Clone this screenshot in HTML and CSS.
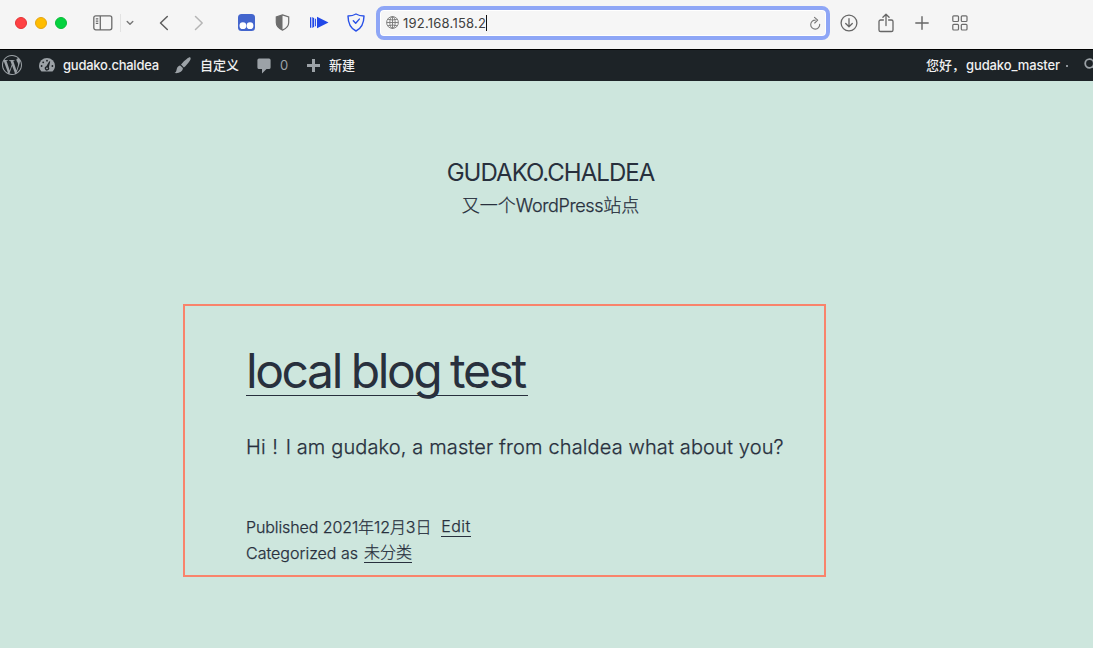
FILE: index.html
```html
<!DOCTYPE html>
<html lang="zh-CN">
<head>
<meta charset="utf-8">
<title>gudako.chaldea</title>
<link rel="stylesheet" href="styles.css">
</head>
<body>
<header class="toolbar">
  <span class="light red"></span><span class="light yellow"></span><span class="light green"></span>
  <svg class="sidebar-icon" width="20" height="16" viewBox="0 0 20 16" fill="none" stroke="#6b6b6b" stroke-width="1.3"><rect x=".8" y=".8" width="18" height="14" rx="2"/><path d="M7.3 1v14M2.8 3.8h2.5M2.8 6.1h2.5M2.8 8.4h2.5"/></svg>
  <span class="divider"></span>
  <svg class="chevron" width="8" height="6" viewBox="0 0 8 6" fill="none" stroke="#777" stroke-width="1.4" stroke-linecap="round" stroke-linejoin="round"><path d="M1.2 1.4 4 4.2 6.8 1.4"/></svg>
  <svg class="back" width="10" height="16" viewBox="0 0 10 16" fill="none" stroke="#5f5f5f" stroke-width="1.5" stroke-linecap="round" stroke-linejoin="round"><path d="M8.3 1.5 1.5 8l6.8 6.5"/></svg>
  <svg class="forward" width="10" height="16" viewBox="0 0 10 16" fill="none" stroke="#b5b5b5" stroke-width="1.5" stroke-linecap="round" stroke-linejoin="round"><path d="M1.5 1.5 8.2 8l-6.7 6.5"/></svg>
  <svg class="ext-mask" width="17" height="17" viewBox="0 0 17 17"><rect width="17" height="17" rx="3.5" fill="#4365cd"/><circle cx="4.9" cy="11.7" r="3.4" fill="#fff"/><circle cx="12" cy="11.7" r="3.4" fill="#fff"/></svg>
  <svg class="ext-shield" width="15" height="17" viewBox="0 0 15 17"><path d="M7.5.9 13.7 3v5.500c0 3.600-2.500 6-6.200 7.600C3.800 14.500 1.300 12.100 1.300 8.500V3z" fill="none" stroke="#6d6d6d" stroke-width="1.2"/><path d="M7.5.9 1.300 3v5.500c0 3.600 2.500 6 6.200 7.600z" fill="#6d6d6d"/></svg>
  <svg class="ext-play" width="19" height="13" viewBox="0 0 19 13" fill="#2148e8"><path d="M0 1.200h1.300v10.600H0zM2.300 1l1.900 1.200v8.600L2.300 12zM5.100 2.500l.9.400v7.200l-.9.400zM7 .8 18.500 6.500 7 12.200z"/></svg>
  <svg class="ext-check" width="18" height="19" viewBox="0 0 18 19" fill="none" stroke="#2850e8" stroke-width="1.4" stroke-linecap="round" stroke-linejoin="round"><path d="M9 1c2.300 1.400 5 2 8 2-.1 7.300-2.200 12.200-8 15C3.200 15.200 1.100 10.300 1 3c3 0 5.700-.6 8-2z"/><path d="m6.300 7.700 2.400 2.600 3.600-4.200"/></svg>
  <div class="address">
    <svg width="13" height="13" viewBox="0 0 13 13" fill="none" stroke="#777" stroke-width=".9"><circle cx="6.500" cy="6.500" r="5.900"/><ellipse cx="6.500" cy="6.500" rx="2.700" ry="5.900"/><path d="M6.500.6v11.800M.6 6.500h11.800M1.700 3.200q4.800 1.600 9.600 0M1.700 9.800q4.800-1.600 9.600 0"/></svg>
    <span class="url">192.168.158.2</span><span class="caret"></span>
    <svg class="reload" width="12" height="14" viewBox="0 0 12 14" fill="none" stroke="#777" stroke-width="1.1" stroke-linecap="round" stroke-linejoin="round"><path d="M6 4.100h.3A4.500 4.500 0 1 0 10.700 8.300M5.500 1.300l3.200 2.900L5.700 7"/></svg>
  </div>
  <svg class="download" width="18" height="18" viewBox="0 0 18 18" fill="none" stroke="#666" stroke-width="1.3" stroke-linecap="round" stroke-linejoin="round"><circle cx="9" cy="9" r="7.900"/><path d="M9 4.700v8M5.700 9.500 9 12.800l3.300-3.300"/></svg>
  <svg class="share" width="16" height="20" viewBox="0 0 16 20" fill="none" stroke="#666" stroke-width="1.3" stroke-linecap="round" stroke-linejoin="round"><path d="M5.400 7H2.600A1.600 1.600 0 0 0 1 8.600v8.300a1.600 1.600 0 0 0 1.600 1.600h10.800a1.600 1.600 0 0 0 1.600-1.600V8.600A1.600 1.600 0 0 0 13.400 7h-2.800M8 12.500V1.300M4.900 4.300 8 1.200l3.100 3.100"/></svg>
  <svg class="plus" width="14" height="14" viewBox="0 0 14 14" stroke="#666" stroke-width="1.4" stroke-linecap="round"><path d="M7 .8v12.400M.8 7h12.400"/></svg>
  <svg class="tabs" width="16" height="16" viewBox="0 0 16 16" fill="none" stroke="#6b6b6b" stroke-width="1.2"><rect x=".8" y=".8" width="5.700" height="5.700" rx="1"/><rect x="9.300" y=".8" width="5.700" height="5.700" rx="1"/><rect x=".8" y="9.300" width="5.700" height="5.700" rx="1"/><rect x="9.300" y="9.300" width="5.700" height="5.700" rx="1"/></svg>
</header>

<nav class="adminbar">
  <svg class="wp" width="20" height="20" viewBox="0 0 24 24" fill="#9ca2a7"><path d="M21.469 6.825c.84 1.537 1.318 3.300 1.318 5.175 0 3.979-2.156 7.456-5.363 9.325l3.295-9.527c.615-1.540.820-2.771.820-3.864 0-.405-.026-.780-.070-1.110m-7.981.105c.647-.030 1.232-.105 1.232-.105.582-.075.514-.930-.067-.899 0 0-1.755.135-2.880.135-1.064 0-2.850-.150-2.850-.150-.585-.030-.661.855-.075.885 0 0 .540.061 1.125.090l1.680 4.605-2.370 7.080L5.354 6.900c.649-.030 1.234-.100 1.234-.100.585-.075.516-.930-.065-.896 0 0-1.746.138-2.874.138-.200 0-.438-.008-.690-.015C4.911 3.150 8.235 1.215 12 1.215c2.809 0 5.365 1.072 7.286 2.833-.046-.003-.091-.009-.141-.009-1.060 0-1.812.923-1.812 1.914 0 .890.513 1.643 1.060 2.531.411.720.890 1.643.890 2.977 0 .915-.354 1.994-.821 3.479l-1.075 3.585-3.900-11.610zM12 22.784c-1.059 0-2.081-.153-3.048-.437l3.237-9.406 3.315 9.087c.024.053.050.101.078.149-1.120.393-2.325.609-3.582.609M1.211 12c0-1.564.336-3.050.935-4.390L7.290 21.709C3.694 19.960 1.212 16.271 1.211 12M12 0C5.385 0 0 5.385 0 12s5.385 12 12 12 12-5.385 12-12S18.615 0 12 0"/></svg>
  <svg class="gauge" width="16" height="14" viewBox="0 0 16 14"><path d="M2.500 13.500C1 12 0 10.200 0 8a8 8 0 0 1 16 0c0 2.200-1 4-2.500 5.500z" fill="#9ca2a7"/><g fill="#1d2327"><circle cx="8" cy="2.700" r=".9"/><circle cx="4.200" cy="4.300" r=".9"/><circle cx="2.600" cy="8" r=".9"/><circle cx="13.400" cy="8" r=".9"/><path d="M10.300 3.200 11.200 3.600 9.900 9.300a2.200 2.200 0 1 1-2.600-1z"/></g><circle cx="8" cy="10.300" r=".9" fill="#9ca2a7"/></svg>
  <span class="site">gudako.chaldea</span>
  <svg class="brush" width="17" height="17" viewBox="0 0 17 17" fill="#9ca2a7"><path d="M16.300.5c.8.800.1 2.300-1 3.900-1.300 2-3.300 4.300-5.400 6L7 7.600C8.800 5.200 11 3.100 13 1.700 14.500.6 15.700 0 16.300.5zM6.200 8.500l2.700 2.600c-.1 3.700-4.100 5.600-8.400 5 2-1 1.700-2.500 2.400-4.600.6-1.700 1.700-2.800 3.300-3z"/></svg>
  <span class="customize">自定义</span>
  <svg class="comment" width="14" height="16" viewBox="0 0 14 16" fill="#9ca2a7"><path d="M2 .5h10A1.600 1.600 0 0 1 13.600 2v7.500A1.600 1.600 0 0 1 12 11H9.500L5 15.500V11H2A1.600 1.600 0 0 1 .4 9.500V2A1.600 1.600 0 0 1 2 .5z"/></svg>
  <span class="count">0</span>
  <svg class="new-icon" width="13" height="13" viewBox="0 0 13 13" fill="#9ca2a7"><path d="M5 0h3v5h5v3H8v5H5V8H0V5h5z"/></svg>
  <span class="new">新建</span>
  <span class="greeting">您好，</span><span class="user">gudako_master</span><span class="avatar-dot"></span>
  <svg class="search" width="9" height="14" viewBox="0 0 9 14" fill="none" stroke="#9ca2a7" stroke-width="1.8"><circle cx="5.500" cy="5.500" r="4.300"/><path d="m8.500 8.600 4 4"/></svg>
</nav>

<main class="page">
  <div class="branding">
    <h1 class="title">GUDAKO.CHALDEA</h1>
    <p class="tagline">又一个<span class="tag-latin">WordPress</span>站点</p>
  </div>
  <article class="post">
    <h2 class="post-title"><a href="#">local blog test</a></h2>
    <p class="content">Hi<span class="bang"> ! </span>I am gudako, a master from chaldea what about you?</p>
    <footer class="meta">
      <div class="line"><span class="published">Published 2021年12月3日</span><a class="edit" href="#">Edit</a></div>
      <div class="line"><span class="categorized">Categorized as</span><a class="category" href="#">未分类</a></div>
    </footer>
  </article>
</main>
</body>
</html>
```

FILE: styles.css
```css
* { box-sizing: border-box; }
body {
  margin: 0;
  height: 648px;
  overflow: hidden;
  background: #cde6dd;
  color: #28303d;
  font-family: Inter, "Noto Sans CJK SC", sans-serif;
}
svg { display: block; flex: none; }
h1, h2, p { margin: 0; font-weight: 400; }
a { color: inherit; text-decoration: none; }
span, a { white-space: nowrap; }

.toolbar {
  display: flex;
  align-items: center;
  height: 50px;
  padding: 0 0 4px 15px;
  background: #f5f5f5;
  border-bottom: 1px solid #000;
}
.light { width: 12px; height: 12px; margin-right: 8px; border-radius: 50%; flex: none; }
.red { background: #ff4143; border: 1px solid #e33336; }
.yellow { background: #ffbd00; border: 1px solid #e3a414; }
.green { background: #04d23f; border: 1px solid #0abb37; }
.sidebar-icon { margin-left: 18px; }
.divider { width: 1px; height: 18px; margin-left: 7px; background: #e2e2e2; }
.chevron { margin-left: 5px; }
.back { margin-left: 25px; }
.forward { margin-left: 25px; }
.ext-mask { margin-left: 34px; }
.ext-shield { margin-left: 20px; }
.ext-play { margin-left: 20px; }
.ext-check { margin-left: 18px; }
.address {
  display: flex;
  align-items: center;
  width: 454px;
  height: 34px;
  margin-left: 11px;
  padding-left: 6px;
  background: #f6f6f6;
  border: 4px solid #8ea6f6;
  border-radius: 8px;
  box-shadow: inset 0 0 0 1px #fff;
}
.url { margin-left: 4px; font-size: 13px; letter-spacing: .22px; color: #404040; }
.caret { width: 1px; height: 16px; background: #111; }
.reload { margin: 0 5px 0 auto; }
.download { margin-left: 10px; }
.share { margin-left: 20px; }
.plus { margin-left: 21px; }
.tabs { margin-left: 23px; }

.adminbar {
  display: flex;
  align-items: center;
  height: 31px;
  padding-left: 2px;
  background: #1d2327;
  color: #f0f0f1;
  font-size: 13px;
  font-weight: 500;
  line-height: 31px;
}
.wp { margin-top: -1px; }
.gauge { margin: -1px 0 0 17px; }
.site { width: 96px; margin-left: 8px; letter-spacing: -.24px; }
.brush { margin-left: 15px; }
.customize { width: 39px; margin-left: 9px; }
.comment { margin-left: 18px; }
.count { width: 8px; margin-left: 9px; color: #9ca2a7; font-weight: 400; }
.new-icon { margin-left: 19px; }
.new { margin-left: 9px; }
.greeting { width: 40px; margin-left: auto; }
.user { width: 94px; letter-spacing: -.12px; }
.avatar-dot { width: 2px; height: 2px; margin-left: 6px; background: #8c9297; }
.search { margin: -1px 0 0 16px; }

.branding { display: flex; flex-direction: column; align-items: center; padding: 76px 0 0 8px; }
.title { font-size: 24px; line-height: 32px; letter-spacing: -.96px; }
.tagline, .content, .meta { font-weight: 300; -webkit-text-stroke: .25px #28303d; }
.tagline { font-size: 18px; line-height: 34px; }
.tag-latin { letter-spacing: -.35px; }
.post {
  width: 643px;
  height: 273px;
  margin: 81px 0 0 183px;
  padding: 38px 0 0 61px;
  border: 2px solid #f9836b;
}
.post-title { height: 78px; font-size: 48px; line-height: 54px; }
.post-title a {
  display: inline-block;
  width: 282px;
  height: 52px;
  border-bottom: 1px solid #28303d;
  letter-spacing: -2.4px;
  word-spacing: -1.3px;
}
.content { font-size: 20px; line-height: 50px; letter-spacing: .13px; white-space: nowrap; }
.bang { letter-spacing: 1px; }
.meta { margin-top: 40px; font-size: 16px; }
.line { display: flex; align-items: center; height: 27px; }
.line + .line { padding-top: 1px; }
.published { letter-spacing: -.1px; }
.edit { margin-left: 10px; letter-spacing: .4px; }
.category { margin-left: 6px; }
.edit, .category { height: 20px; line-height: 19px; border-bottom: 1px solid #28303d; }
.edit { position: relative; top: 1px; }
```
